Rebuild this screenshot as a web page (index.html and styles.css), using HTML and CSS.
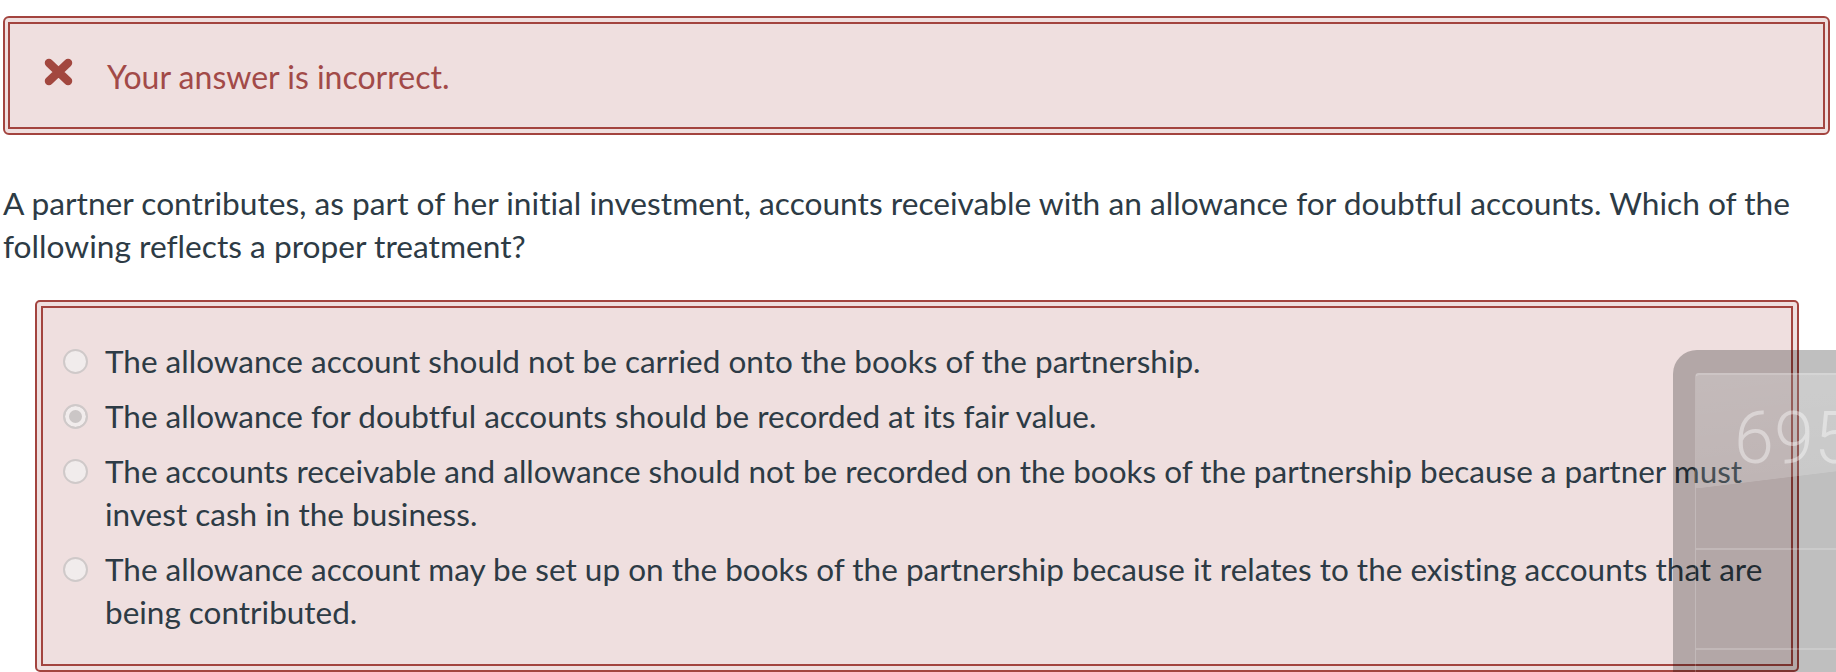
FILE: index.html
```html
<!DOCTYPE html>
<html lang="en">
<head>
<meta charset="utf-8">
<title>Quiz result</title>
<link rel="stylesheet" href="styles.css">
</head>
<body>
<div class="page">
  <div class="alert">
    <div class="alert-inner">
      <svg class="x-icon" width="29" height="28" viewBox="0 0 29 28" aria-hidden="true">
        <path d="M5 5 L24 23 M24 5 L5 23" stroke="#a2473f" stroke-width="8.5" stroke-linecap="round" fill="none"/>
      </svg>
      <span class="alert-text">Your answer is incorrect.</span>
    </div>
  </div>

  <p class="question">A partner contributes, as part of her initial investment, accounts receivable with an allowance for doubtful accounts. Which of the following reflects a proper treatment?</p>

  <div class="answers">
    <div class="answers-inner">
      <div class="option">
        <span class="radio"></span>
        <span class="option-text">The allowance account should not be carried onto the books of the partnership.</span>
      </div>
      <div class="option">
        <span class="radio radio-checked"></span>
        <span class="option-text">The allowance for doubtful accounts should be recorded at its fair value.</span>
      </div>
      <div class="option">
        <span class="radio"></span>
        <span class="option-text">The accounts receivable and allowance should not be recorded on the books of the partnership because a partner must invest cash in the business.</span>
      </div>
      <div class="option">
        <span class="radio"></span>
        <span class="option-text">The allowance account may be set up on the books of the partnership because it relates to the existing accounts that are being contributed.</span>
      </div>
    </div>
  </div>
</div>

<div class="calc">
  <div class="calc-panel">
    <div class="calc-display"><span class="calc-number">695</span></div>
    <div class="calc-row"></div>
    <div class="calc-row"></div>
  </div>
</div>
</body>
</html>
```

FILE: styles.css
```css
html, body {
  margin: 0;
  padding: 0;
  background: #ffffff;
  overflow: hidden;
}

body {
  font-family: Lato, "Open Sans", "Liberation Sans", sans-serif;
  font-variant-ligatures: none;
  color: #2d3b45;
  width: 1836px;
  height: 672px;
  position: relative;
}

.page {
  padding: 16px 6px 0 3px;
}

.alert {
  border: 2px solid #a3443f;
  border-radius: 6px;
  padding: 4px 3px;
  background: #efdfdf;
}

.alert-inner {
  border: 2px solid #a3443f;
  height: 103px;
  display: flex;
  align-items: center;
  padding-left: 34px;
}

.x-icon {
  flex: none;
  margin-right: 34px;
  margin-top: -8px;
}

.alert-text {
  color: #a24a48;
  font-size: 32px;
  line-height: 1;
  margin-top: 3px;
}

.question {
  margin: 47px 0 32px 0;
  font-size: 31.7px;
  line-height: 43px;
}

.answers {
  margin-left: 32px;
  margin-right: 31px;
  border: 2px solid #a3443f;
  border-radius: 5px;
  padding: 4px;
  background: #efdfdf;
}

.answers-inner {
  border: 2px solid #a3443f;
  padding: 32px 20px 30px 20px;
  display: flex;
  flex-direction: column;
  gap: 12px;
}

.option {
  display: flex;
  align-items: flex-start;
  font-size: 31.5px;
  line-height: 43px;
}

.radio {
  flex: none;
  width: 21px;
  height: 21px;
  margin-top: 9px;
  margin-right: 17px;
  border: 2px solid #cfc9c9;
  border-radius: 50%;
  background: #f1ecec;
  box-sizing: content-box;
}

.radio-checked {
  background: #cbc6c6;
  box-shadow: inset 0 0 0 4px #f1ecec;
}

.calc {
  position: absolute;
  left: 1673px;
  top: 350px;
  width: 200px;
  height: 322px;
  border-radius: 24px 0 0 0;
  background: rgba(0, 0, 0, 0.25);
  padding: 23px 0 0 22px;
  box-sizing: border-box;
  overflow: hidden;
}

.calc-panel {
  border-top: 2px solid rgba(255, 255, 255, 0.35);
  border-left: 1px solid rgba(255, 255, 255, 0.2);
  border-radius: 4px 0 0 0;
  height: 100%;
}

.calc-display {
  position: relative;
  height: 113px;
  background: linear-gradient(173deg, rgba(255, 255, 255, 0.22) 0%, rgba(255, 255, 255, 0.16) 84%, rgba(255, 255, 255, 0) 84.5%);
  overflow: hidden;
}

.calc-number {
  position: absolute;
  left: 38px;
  top: 28px;
  font-family: Roboto, "Liberation Sans", sans-serif;
  font-weight: 300;
  font-size: 72px;
  line-height: 1;
  color: rgba(255, 255, 255, 0.4);
}

.calc-row {
  height: 60px;
  border-bottom: 2px solid rgba(255, 255, 255, 0.2);
}

.calc-row + .calc-row {
  height: 98px;
}
```
